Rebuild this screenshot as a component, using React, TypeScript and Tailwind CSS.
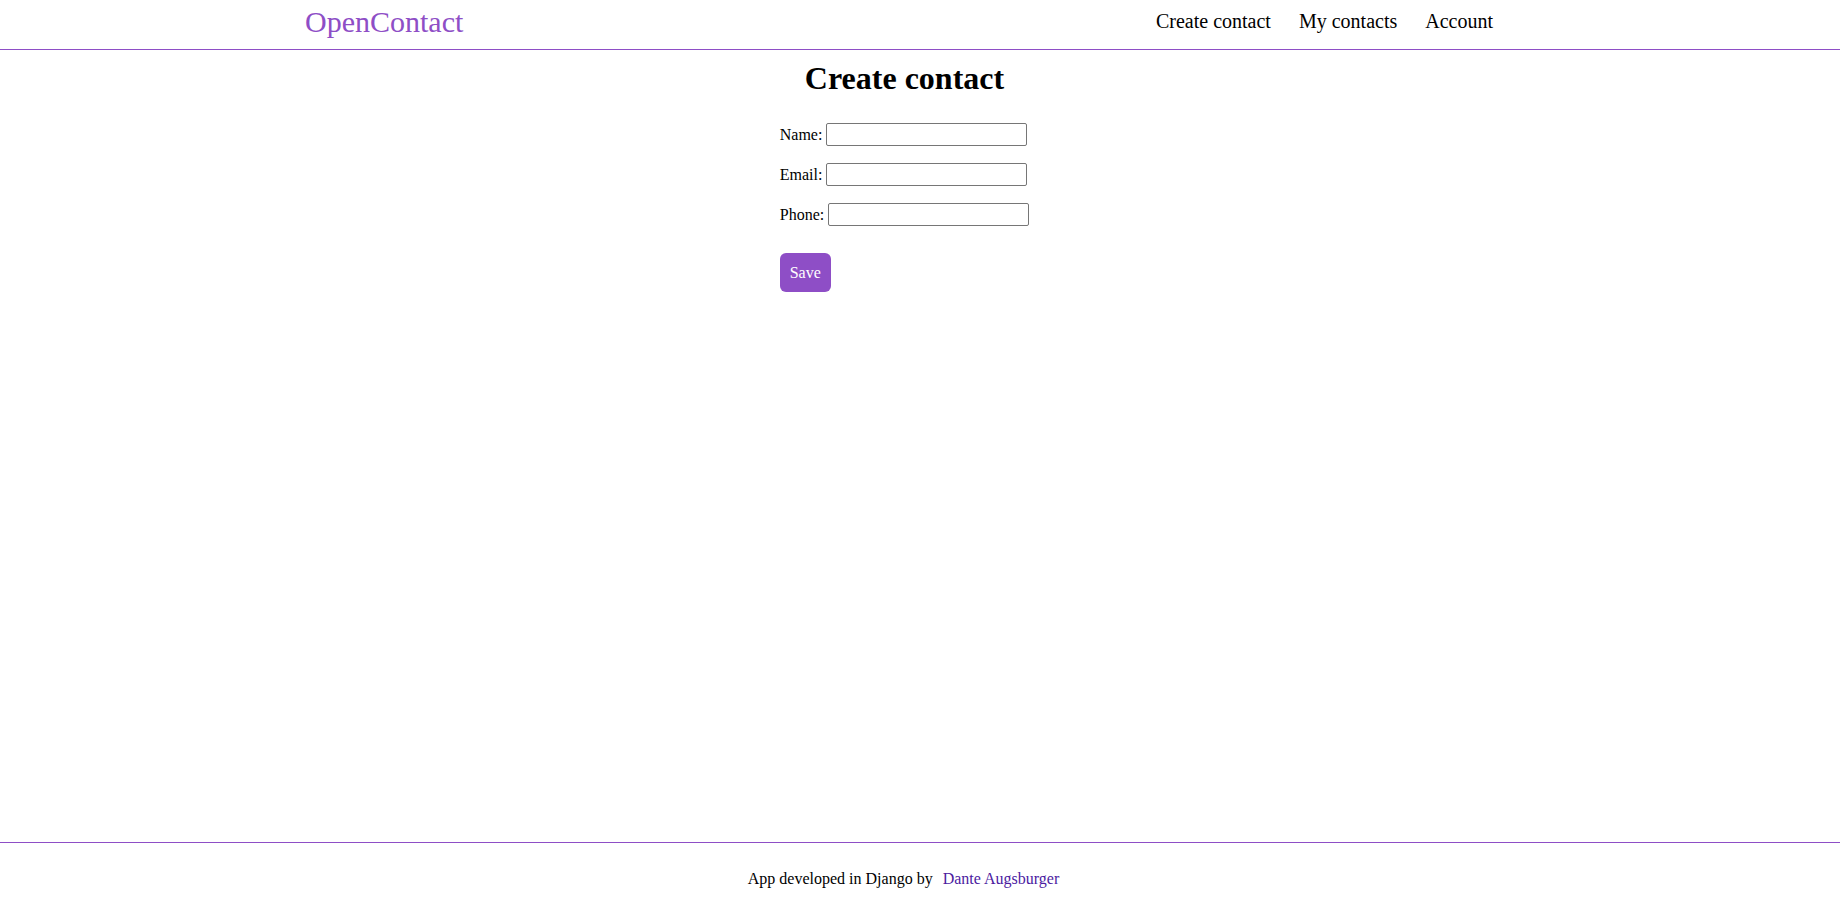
const Header = () => {
  return (
    <header className="h-[50px] border-b border-[#8e4ec6] flex justify-between items-start pl-[305px] pr-[347px]">
      <a href="/" className="mt-[5px] text-[30px] leading-[34px] text-[#8e4ec6]">
        OpenContact
      </a>
      <nav className="mt-[10px]">
        <ul className="flex gap-[28px] text-[20px] leading-[23px] text-black">
          <li>
            <a href="#">Create contact</a>
          </li>
          <li>
            <a href="#">My contacts</a>
          </li>
          <li>
            <a href="#">Account</a>
          </li>
        </ul>
      </nav>
    </header>
  );
};

const Field = ({ label }: { label: string }) => {
  return (
    <div className="flex items-center gap-[4px] h-[23px]">
      <label className="text-[16px] leading-[18px]">{label}:</label>
      <input
        type="text"
        className="w-[201px] h-[23px] border border-[#767676] rounded-[2px] px-[2px] bg-white outline-0"
      />
    </div>
  );
};

const App = () => {
  return (
    <div className="min-h-screen flex flex-col bg-white text-black font-['Liberation_Serif',serif]">
      <Header />
      <main className="flex-1 flex flex-col items-center pr-[31px]">
        <h1 className="mt-[10px] text-[32px] leading-[37px] font-bold">Create contact</h1>
        <form className="mt-[26px] flex flex-col items-start">
          <div className="flex flex-col gap-[17px]">
            <Field label="Name" />
            <Field label="Email" />
            <Field label="Phone" />
          </div>
          <button
            type="button"
            className="mt-[27px] w-[51px] h-[39px] rounded-[6px] bg-[#8e4ec6] text-white text-[16px] leading-[18px]"
          >
            Save
          </button>
        </form>
      </main>
      <footer className="h-[67px] border-t border-[#8e4ec6] flex justify-center items-start pt-[27px] pr-[33px] text-[16px] leading-[18px]">
        <span>
          App developed in Django by{" "}
          <a href="#" className="ml-[6px] text-[#4b1a9f]">
            Dante Augsburger
          </a>
        </span>
      </footer>
    </div>
  );
};

export default App;
